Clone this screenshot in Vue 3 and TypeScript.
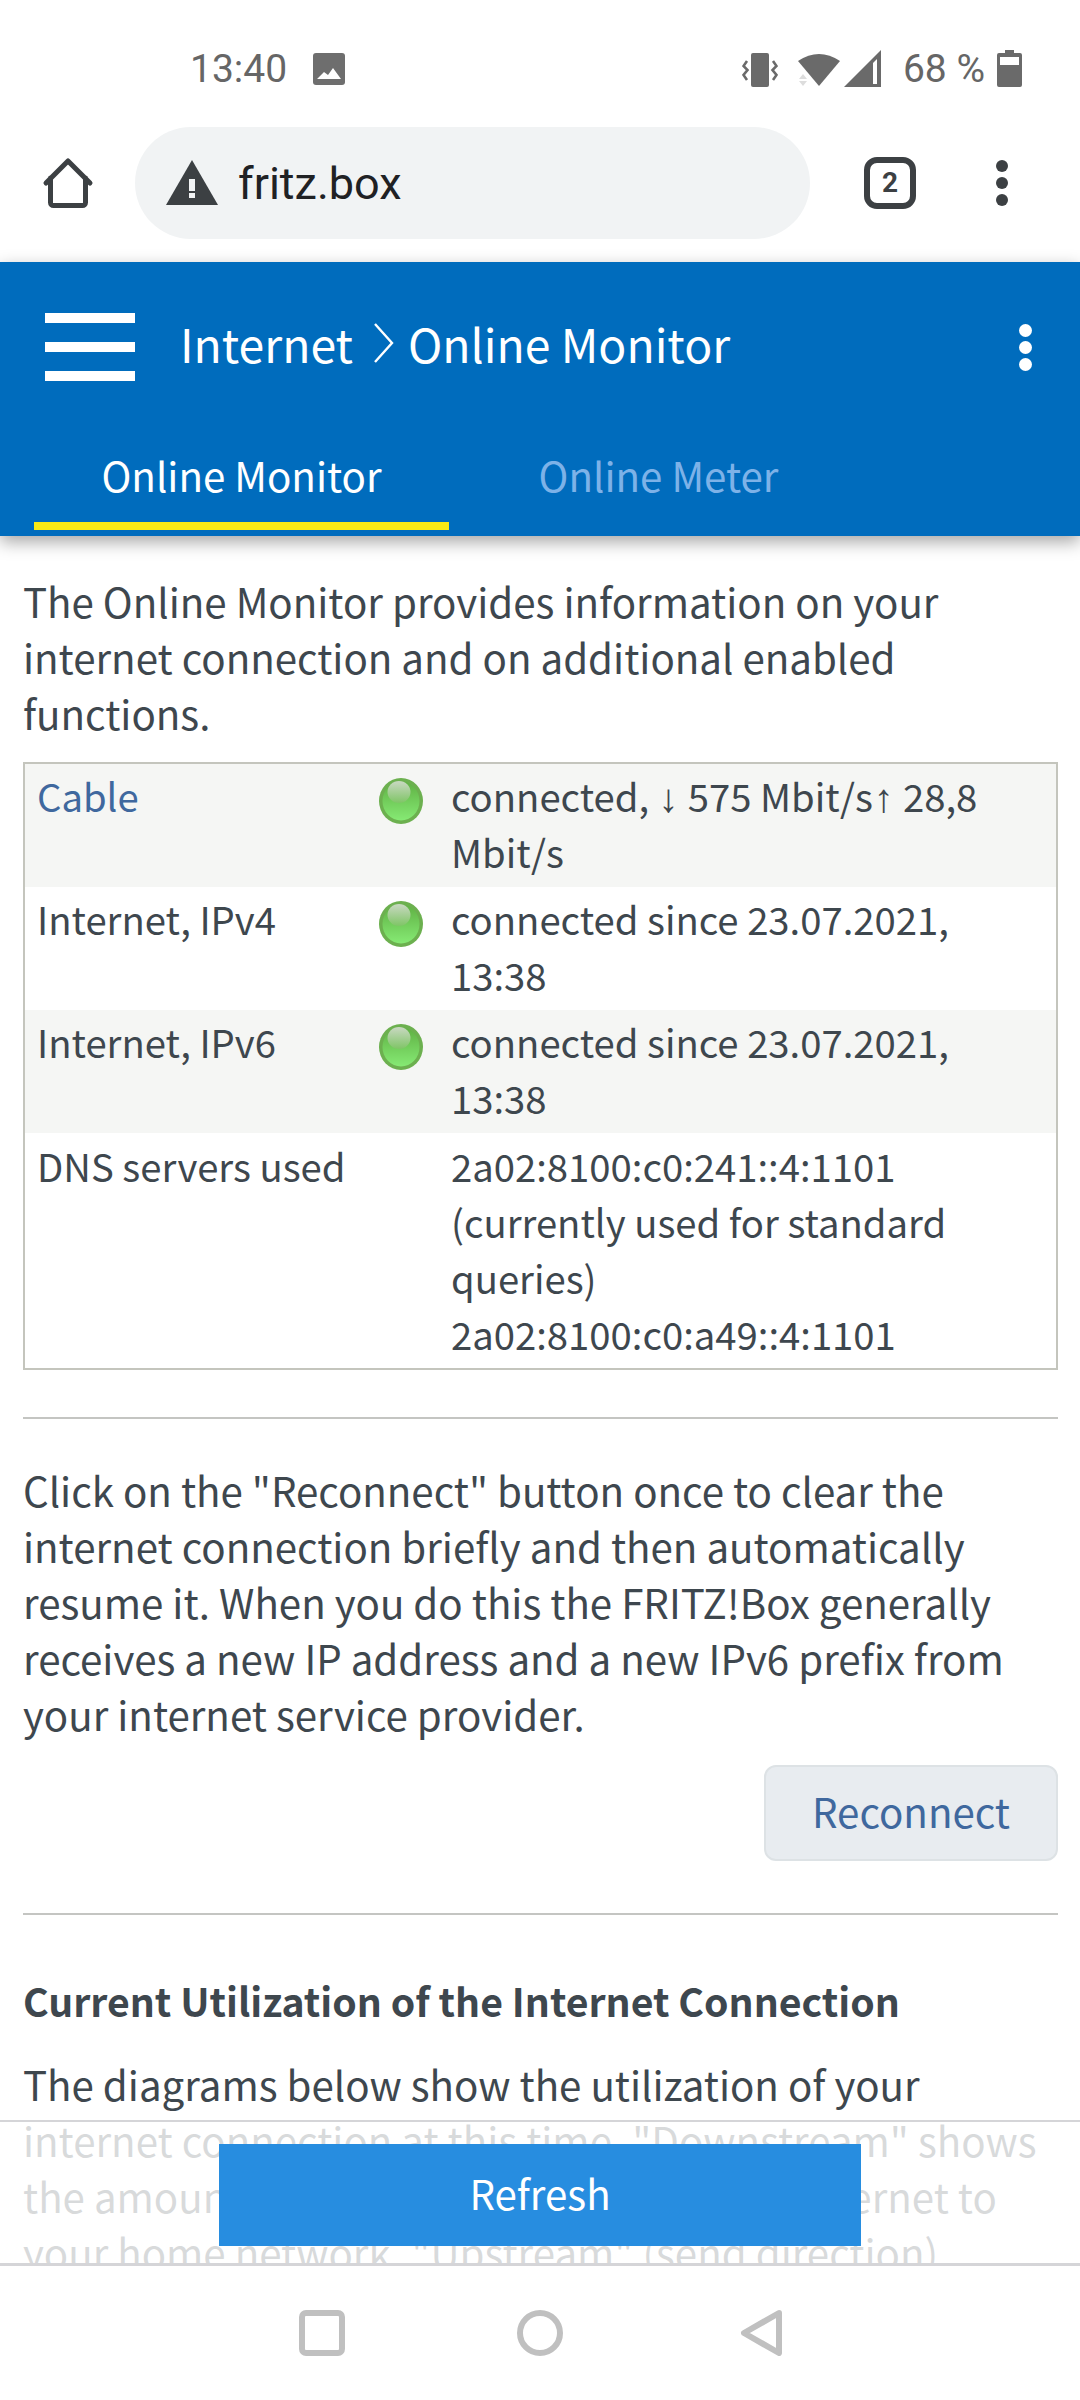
<template>
  <div class="phone">
    <div class="status-bar">
      <span class="clock">13:40</span>
      <svg class="ic-image" viewBox="0 0 32 32">
        <rect width="32" height="32" rx="3" fill="#6e6e6e" />
        <path d="M4 26 L11 19 L15 22 L20 15 L28 26 Z" fill="#fff" />
      </svg>
      <span class="spacer"></span>
      <svg class="ic-vibrate" viewBox="0 0 36 34">
        <rect x="9" y="0" width="18" height="34" rx="2" fill="#6a6a6a" />
        <path d="M5 8 L1.5 13 L5.5 17 L1.5 22 L5 27 M31 8 L34.5 13 L30.5 17 L34.5 22 L31 27" fill="none" stroke="#6a6a6a" stroke-width="2.6" />
      </svg>
      <svg class="ic-wifi" viewBox="0 0 44 36">
        <path d="M1 10 Q22 -4 43 10 L22 35 Z" fill="#6a6a6a" />
        <path d="M2 28 L6 23 L10 28 Z M2 30 H10 L6 35 Z" fill="#ddd" />
      </svg>
      <svg class="ic-signal" viewBox="0 0 37 37">
        <path d="M0 37 L37 0 V37 Z" fill="#6a6a6a" />
        <path d="M29 13 L33 9 V34 H29 Z" fill="#fff" />
      </svg>
      <span class="battery-text">68 %</span>
      <svg class="ic-battery" viewBox="0 0 25 37">
        <path d="M8 0 H17 V3 H23 Q25 3 25 5 V35 Q25 37 23 37 H2 Q0 37 0 35 V5 Q0 3 2 3 H8 Z" fill="#6a6a6a" />
        <rect x="3" y="7" width="19" height="8" fill="#fff" />
      </svg>
    </div>

    <div class="toolbar">
      <svg class="ic-home" viewBox="0 0 52 52">
        <path d="M4 26 L26 4 L48 26 M8.5 21 V45.5 a3 3 0 0 0 3 3 H40.5 a3 3 0 0 0 3 -3 V21" fill="none" stroke="#3c4043" stroke-width="5" stroke-linecap="round" stroke-linejoin="round" />
      </svg>
      <div class="url-pill">
        <svg class="ic-warning" viewBox="0 0 52 46">
          <path d="M26 0 L52 45 H0 Z" fill="#3c4043" />
          <rect x="23" y="19" width="6" height="12" fill="#f1f3f4" />
          <rect x="23" y="33" width="6" height="5" fill="#f1f3f4" />
        </svg>
        <span class="url">fritz.box</span>
      </div>
      <div class="tab-count">2</div>
      <div class="chrome-menu">
        <i></i><i></i><i></i>
      </div>
    </div>

    <header class="app-header">
      <div class="title-row">
        <div class="burger"><i></i><i></i><i></i></div>
        <h1 class="title">
          <span>Internet</span>
          <svg class="crumb" viewBox="0 0 22 40">
            <path d="M2 1 L19 20 L2 39" fill="none" stroke="#fff" stroke-width="2.4" />
          </svg>
          <span>Online Monitor</span>
        </h1>
        <div class="header-menu"><i></i><i></i><i></i></div>
      </div>
      <nav class="tabs">
        <a class="tab active">Online Monitor</a>
        <a class="tab">Online Meter</a>
      </nav>
    </header>

    <div class="content-wrap">
      <main class="content">
        <p>The Online Monitor provides information on your internet connection and on additional enabled functions.</p>

        <div class="status-table">
          <div v-for="row in rows" :key="row.label" class="row">
            <div class="label" :class="{ link: row.link }">{{ row.label }}</div>
            <div class="led-cell">
              <svg v-if="row.led" class="led" viewBox="0 0 44 46">
                <defs>
                  <linearGradient id="ledFill" x1="0" y1="0" x2="0" y2="1">
                    <stop offset="0" stop-color="#5fb043" />
                    <stop offset="1" stop-color="#86ea74" />
                  </linearGradient>
                  <linearGradient id="ledShine" x1="0" y1="0" x2="0" y2="1">
                    <stop offset="0" stop-color="#c9d8c2" />
                    <stop offset="1" stop-color="#7fc566" />
                  </linearGradient>
                </defs>
                <ellipse cx="22" cy="23" rx="22" ry="23" fill="#6cb04f" />
                <ellipse cx="22" cy="23" rx="18.5" ry="19.5" fill="url(#ledFill)" />
                <ellipse cx="20" cy="14" rx="11.5" ry="11" fill="url(#ledShine)" />
              </svg>
            </div>
            <div class="value">
              <div v-for="line in row.value" :key="line">
                <template v-for="(part, i) in line.split(/([↓↑])/)" :key="i">
                  <span v-if="part === '↓' || part === '↑'" class="arrow">{{ part }}</span>
                  <template v-else>{{ part }}</template>
                </template>
              </div>
            </div>
          </div>
        </div>

        <hr class="sep-first" />

        <p>Click on the "Reconnect" button once to clear the internet connection briefly and then automatically resume it. When you do this the FRITZ!Box generally receives a new IP address and a new IPv6 prefix from your internet service provider.</p>

        <div class="btn-row">
          <button class="reconnect" type="button">Reconnect</button>
        </div>

        <hr class="sep-second" />

        <h2>Current Utilization of the Internet Connection</h2>
        <p>The diagrams below show the utilization of your internet connection at this time. "Downstream" shows the amount of data now flowing from the internet to your home network. "Upstream" (send direction) shows the amount of data flowing the other way.</p>
      </main>

      <div class="footer-bar">
        <button class="refresh" type="button">Refresh</button>
      </div>
    </div>

    <div class="nav-bar">
      <svg class="nav-ic" viewBox="0 0 46 46">
        <rect x="3" y="3" width="40" height="40" rx="4" fill="none" stroke="#c0c0c0" stroke-width="6" />
      </svg>
      <svg class="nav-ic" viewBox="0 0 46 46">
        <circle cx="23" cy="23" r="20" fill="none" stroke="#c0c0c0" stroke-width="6" />
      </svg>
      <svg class="nav-ic nav-back" viewBox="0 0 46 46">
        <path d="M40 3 L5 23 L40 43 Z" fill="none" stroke="#c0c0c0" stroke-width="6" stroke-linejoin="round" />
      </svg>
    </div>
  </div>
</template>

<script setup lang="ts">
interface StatusRow {
  label: string
  value: string[]
  led: boolean
  link?: boolean
}

const rows: StatusRow[] = [
  { label: 'Cable', value: ['connected, ↓ 575 Mbit/s↑ 28,8 Mbit/s'], led: true, link: true },
  { label: 'Internet, IPv4', value: ['connected since 23.07.2021, 13:38'], led: true },
  { label: 'Internet, IPv6', value: ['connected since 23.07.2021, 13:38'], led: true },
  {
    label: 'DNS servers used',
    value: ['2a02:8100:c0:241::4:1101', '(currently used for standard queries)', '2a02:8100:c0:a49::4:1101'],
    led: false,
  },
]
</script>

<style>
html,
body {
  margin: 0;
  background: #fff;
}
</style>

<style scoped>
.phone {
  width: 1080px;
  height: 2400px;
  display: flex;
  flex-direction: column;
  overflow: hidden;
  background: #fff;
  font-family: "Noto Sans CJK SC", "Noto Sans", sans-serif;
  color: #3e474e;
}

/* status bar */
.status-bar {
  height: 127px;
  box-sizing: border-box;
  padding: 50px 58px 40px 190px;
  display: flex;
  align-items: flex-start;
  font-family: Roboto, sans-serif;
  color: #666;
  font-size: 39px;
  line-height: 38px;
}
.ic-image {
  width: 32px;
  height: 32px;
  margin: 3px 0 0 26px;
}
.spacer {
  flex: 1;
}
.ic-vibrate {
  width: 36px;
  height: 34px;
  margin-top: 3px;
}
.ic-wifi {
  width: 44px;
  height: 36px;
  margin: 1px 0 0 19px;
}
.ic-signal {
  width: 37px;
  height: 37px;
  margin-left: 3px;
}
.battery-text {
  margin-left: 22px;
}
.ic-battery {
  width: 25px;
  height: 37px;
  margin-left: 12px;
}

/* chrome toolbar */
.toolbar {
  height: 135px;
  display: flex;
  align-items: flex-start;
  box-sizing: border-box;
}
.ic-home {
  width: 52px;
  height: 52px;
  margin: 30px 0 0 42px;
}
.url-pill {
  width: 675px;
  height: 112px;
  margin-left: 41px;
  border-radius: 56px;
  background: #f1f3f4;
  display: flex;
  align-items: center;
  padding-left: 31px;
  box-sizing: border-box;
}
.ic-warning {
  width: 52px;
  height: 46px;
  margin-top: -1px;
}
.url {
  margin-left: 20px;
  font-family: Roboto, sans-serif;
  font-size: 45px;
  color: #202124;
}
.tab-count {
  width: 52px;
  height: 52px;
  box-sizing: border-box;
  margin: 30px 0 0 54px;
  border: 6px solid #3c4043;
  border-radius: 13px;
  font-family: Roboto, sans-serif;
  font-weight: 700;
  font-size: 28px;
  line-height: 40px;
  text-align: center;
  color: #3c4043;
}
.chrome-menu {
  width: 12px;
  margin: 33px 0 0 80px;
  display: flex;
  flex-direction: column;
  gap: 5px;
}
.chrome-menu i {
  width: 12px;
  height: 12px;
  border-radius: 50%;
  background: #3c4043;
}

/* app header */
.app-header {
  height: 274px;
  background: #006cbd;
  box-shadow: 0 6px 16px rgba(0, 0, 0, 0.35);
  position: relative;
  z-index: 1;
  color: #fff;
}
.title-row {
  height: 180px;
  display: flex;
  align-items: flex-start;
  padding-left: 45px;
}
.burger {
  width: 90px;
  margin-top: 51px;
  display: flex;
  flex-direction: column;
  gap: 19px;
}
.burger i {
  height: 10px;
  background: #fff;
}
.title {
  margin: 51px 0 0 45px;
  font-size: 46.3px;
  line-height: 60px;
  font-weight: 400;
  display: flex;
  align-items: center;
}
.crumb {
  width: 22px;
  height: 40px;
  margin: 0 13px 0 20px;
}
.header-menu {
  margin: 62px 48px 0 auto;
  display: flex;
  flex-direction: column;
  gap: 4px;
}
.header-menu i {
  width: 13px;
  height: 13px;
  border-radius: 50%;
  background: #fff;
}
.tabs {
  display: flex;
  padding-left: 34px;
}
.tab {
  width: 415px;
  height: 88px;
  box-sizing: border-box;
  text-align: center;
  font-size: 40.25px;
  line-height: 56px;
  padding-top: 5px;
  color: #7db2e8;
}
.tab + .tab {
  margin-left: 2px;
}
.tab.active {
  color: #fff;
  border-bottom: 8px solid #f9ea15;
}

/* content */
.content-wrap {
  flex: 1;
  min-height: 0;
  position: relative;
  overflow: hidden;
}
.content {
  padding: 37px 22px 0 23px;
  font-size: 40.25px;
  line-height: 56px;
}
p {
  margin: 0;
}
.status-table {
  margin-top: 21px;
  border: 2px solid #c4c5bd;
  font-size: 38.25px;
}
.row {
  display: grid;
  grid-template-columns: 340px 74px 1fr;
  padding: 4px 12px 7px 12px;
}
.row:nth-child(odd) {
  background: #f5f6f4;
}
.row:last-child {
  padding: 5px 12px 6px;
}
.label.link {
  color: #3f689e;
}
.led-cell {
  padding-top: 10px;
}
.led {
  display: block;
  width: 44px;
  height: 46px;
  margin-left: 2px;
}
.arrow {
  font-family: "Liberation Sans", sans-serif;
  font-size: 40px;
  line-height: 1;
  padding: 0 0.75px;
}
hr {
  height: 2px;
  border: 0;
  background: #c4c5c2;
  margin: 0;
}
.sep-first {
  margin: 47px 0 43px;
}
.btn-row {
  display: flex;
  justify-content: flex-end;
  margin-top: 23px;
}
.reconnect {
  width: 294px;
  height: 96px;
  box-sizing: border-box;
  background: #e8ecf0;
  border: 2px solid #dde2e5;
  border-radius: 12px;
  font-family: inherit;
  font-size: 40.25px;
  color: #3f689e;
  padding: 0 0 6px;
}
.sep-second {
  margin: 52px 0 0;
}
h2 {
  margin: 57px 0 28px;
  font-size: 39.2px;
  line-height: 56px;
  font-weight: 700;
}

/* sticky footer */
.footer-bar {
  position: absolute;
  left: 0;
  right: 0;
  bottom: 0;
  height: 146px;
  box-sizing: border-box;
  border-top: 2px solid #d5d5d8;
  border-bottom: 3px solid #d5d5d8;
  background: rgba(255, 255, 255, 0.8);
  display: flex;
  justify-content: center;
  padding-top: 22px;
}
.refresh {
  width: 642px;
  height: 102px;
  border: 0;
  background: #278de0;
  color: #fff;
  font-family: inherit;
  font-size: 40.25px;
  padding: 0 0 6px;
}

/* android nav */
.nav-bar {
  height: 134px;
  box-sizing: border-box;
  padding-top: 44px;
  display: flex;
  justify-content: center;
  align-items: flex-start;
  gap: 172px;
  background: #fff;
}
.nav-ic {
  width: 46px;
  height: 46px;
}
.nav-back {
  position: relative;
  left: 4px;
}
</style>
